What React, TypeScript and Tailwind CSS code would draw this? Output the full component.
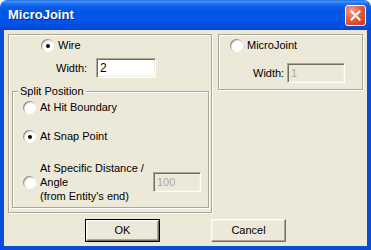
import React from "react";

function Radio({ checked }: { checked?: boolean }) {
  return (
    <span className="w-[13px] h-[13px] rounded-full shrink-0 flex items-center justify-center bg-[radial-gradient(circle_at_65%_65%,#ffffff_45%,#dcd9cd_100%)] shadow-[inset_1px_1px_1px_#8f8c80,inset_-1px_-1px_0_#ffffff]">
      {checked && <span className="w-[4px] h-[4px] rounded-full bg-black" />}
    </span>
  );
}

function CloseBtn() {
  return (
    <span className="w-[21px] h-[21px] rounded-[3px] border border-white flex items-center justify-center bg-[radial-gradient(circle_at_30%_25%,#f5a089_0%,#e2603c_45%,#c5391b_100%)]">
      <svg width="11" height="11" viewBox="0 0 11 11">
        <path d="M1.5 1.5 L9.5 9.5 M9.5 1.5 L1.5 9.5" stroke="#ffffff" strokeWidth="2" strokeLinecap="square" />
      </svg>
    </span>
  );
}

const sunken =
  "border border-t-[#aca899] border-l-[#aca899] border-b-white border-r-white shadow-[inset_1px_1px_0_#716f64,inset_-1px_-1px_0_#f1efe2]";
const sunkenDisabled =
  "border border-t-[#aca899] border-l-[#aca899] border-b-white border-r-white shadow-[inset_1px_1px_0_#716f64,inset_-1px_-1px_0_#f1efe2] bg-[#ece9d8] text-[#aca899]";
const etched = "border border-[#aca899] shadow-[inset_1px_1px_0_#ffffff,1px_1px_0_#ffffff]";
const raised =
  "border border-t-white border-l-white border-b-[#716f64] border-r-[#716f64] shadow-[inset_-1px_-1px_0_#aca899,inset_1px_1px_0_#f1efe2]";

export default function App() {
  return (
    <div className="w-[371px] h-[250px] flex flex-col font-['Liberation_Sans',Arial,sans-serif] text-[11px] leading-[13px] text-black select-none">
      <div className="h-[30px] shrink-0 rounded-t-[7px] bg-[linear-gradient(to_bottom,#0b4fd0_0px,#4a9af7_1px,#2a7af2_3px,#0c5fe8_6px,#0055e5_12px,#0056ea_20px,#004fdf_26px,#0044ce_30px)] flex items-center pl-[8px] pr-[5px]">
        <span className="text-white font-bold text-[13px] leading-[16px] [text-shadow:1px_1px_0_#0a2a8a]">MicroJoint</span>
        <span className="ml-auto">
          <CloseBtn />
        </span>
      </div>
      <div className="flex-1 flex flex-col bg-[#ece9d8] border-x-4 border-b-4 border-[#0a4ed8]">
        <div className="flex items-start mt-[4px] ml-[4px] gap-[6px]">
          {/* Left panel */}
          <div className={`w-[204px] h-[179px] flex flex-col ${etched}`}>
            <div className="flex items-center h-[13px] mt-[4px] pl-[32px]">
              <Radio checked />
              <span className="ml-[4px]">Wire</span>
            </div>
            <div className="flex items-center h-[20px] mt-[6px] pl-[47px]">
              <span className="w-[40px]">Width:</span>
              <div className={`w-[60px] h-[20px] bg-white flex items-center pl-[3px] text-[12px] ${sunken}`}>2</div>
            </div>
            <fieldset className={`mt-[7px] ml-[3px] w-[197px] h-[123px] ${etched}`}>
              <legend className="ml-[5px] px-[2px] bg-[#ece9d8] leading-[13px]">Split Position</legend>
              <div className="flex items-center h-[13px] mt-[3px] pl-[10px]">
                <Radio />
                <span className="ml-[4px]">At Hit Boundary</span>
              </div>
              <div className="flex items-center h-[13px] mt-[16px] pl-[10px]">
                <Radio checked />
                <span className="ml-[4px]">At Snap Point</span>
              </div>
              <div className="flex items-center mt-[18px] pl-[10px]">
                <Radio />
                <div className="ml-[4px] w-[113px] leading-[14px] flex flex-col">
                  <span>At Specific Distance /</span>
                  <span>Angle</span>
                  <span>(from Entity's end)</span>
                </div>
                <div className={`w-[48px] h-[20px] flex items-center pl-[3px] ${sunkenDisabled}`}>100</div>
              </div>
            </fieldset>
          </div>
          {/* Right panel */}
          <div className={`w-[145px] h-[56px] flex flex-col ${etched}`}>
            <div className="flex items-center h-[13px] mt-[4px] pl-[11px]">
              <Radio />
              <span className="ml-[4px]">MicroJoint</span>
            </div>
            <div className="flex items-center h-[20px] mt-[11px] pl-[34px]">
              <span className="w-[34px]">Width:</span>
              <div className={`w-[58px] h-[20px] flex items-center pl-[3px] ${sunkenDisabled}`}>1</div>
            </div>
          </div>
        </div>
        <div className="flex justify-center gap-[51px] mt-[6px]">
          <div className="w-[75px] h-[23px] border border-black">
            <div className={`w-full h-full flex items-center justify-center ${raised}`}>OK</div>
          </div>
          <div className={`w-[75px] h-[23px] flex items-center justify-center ${raised}`}>Cancel</div>
        </div>
      </div>
    </div>
  );
}
